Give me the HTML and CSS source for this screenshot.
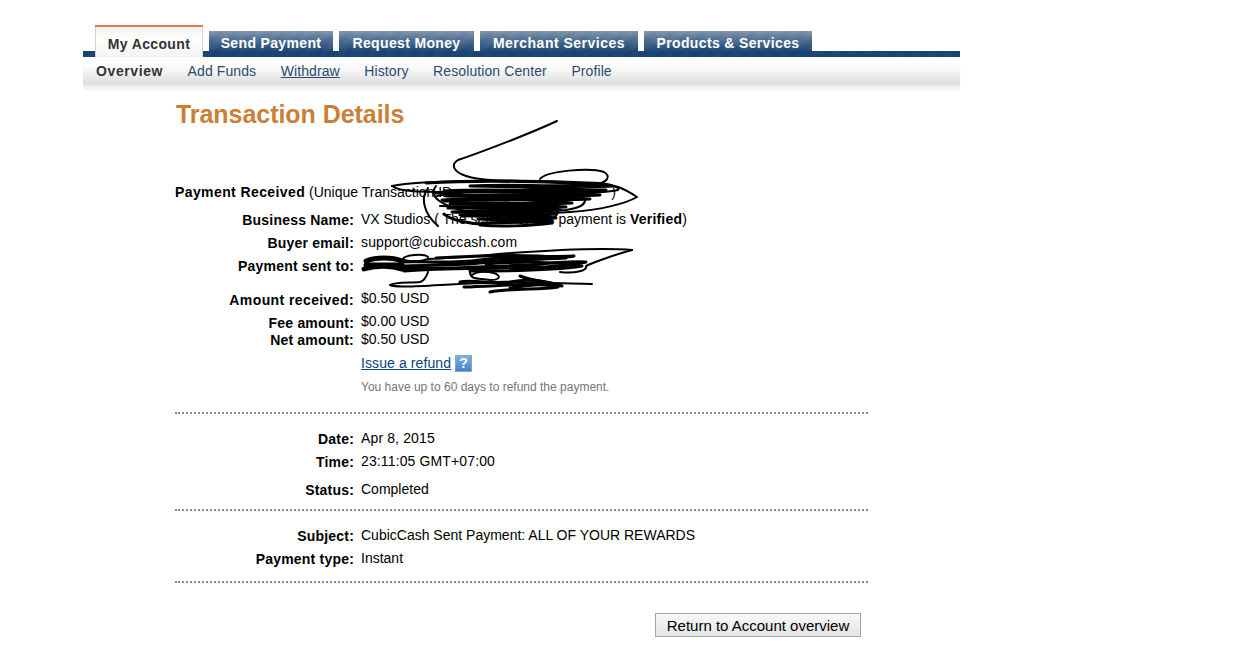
FILE: index.html
```html
<!DOCTYPE html>
<html lang="en">
<head>
  <meta charset="UTF-8">
  <meta name="viewport" content="width=device-width, initial-scale=1">
  <title>Transaction Details</title>
  <link rel="stylesheet" href="styles.css">
</head>

<body>

<div class="page">
  <div class="tabs">
    <a class="tab active" href="#">My Account</a>
    <a class="tab tab-send" href="#">Send Payment</a>
    <a class="tab tab-request" href="#">Request Money</a>
    <a class="tab tab-merchant" href="#">Merchant Services</a>
    <a class="tab tab-products" href="#">Products &amp; Services</a>
  </div>
  <div class="bar"></div>
  <div class="subnav">
    <a class="current" href="#">Overview</a>
    <a href="#">Add Funds</a>
    <a class="hover" href="#">Withdraw</a>
    <a href="#">History</a>
    <a href="#">Resolution Center</a>
    <a href="#">Profile</a>
  </div>

  <div class="content">
    <h1>Transaction Details</h1>

    <p class="received"><b>Payment Received</b> (Unique Transaction ID<span class="blanked"></span>)</p>

    <div class="row"><b>Business Name:</b><div>VX Studios ( The sender of this payment is <b>Verified</b>)</div></div>
    <div class="row"><b>Buyer email:</b><div class="wide">support@cubiccash.com</div></div>
    <div class="row row-sent"><b>Payment sent to:</b><div></div></div>
    <div class="row row-amount"><b>Amount received:</b><div>$0.50 USD</div></div>
    <div class="row row-net"><b>Fee amount:</b><div>$0.00 USD</div></div>
    <div class="row row-refund"><b>Net amount:</b><div>$0.50 USD</div></div>
    <div class="row row-note">
      <b></b>
      <div><a class="refund" href="#">Issue a refund</a><span class="help">?</span></div>
    </div>
    <div class="row"><b></b><div class="note">You have up to 60 days to refund the payment.</div></div>

    <hr class="dots dots-first">

    <div class="row"><b>Date:</b><div class="wide">Apr 8, 2015</div></div>
    <div class="row row-time"><b>Time:</b><div class="wide">23:11:05 GMT+07:00</div></div>
    <div class="row"><b>Status:</b><div>Completed</div></div>

    <hr class="dots dots-second">

    <div class="row"><b>Subject:</b><div>CubicCash Sent Payment: ALL OF YOUR REWARDS</div></div>
    <div class="row"><b>Payment type:</b><div>Instant</div></div>

    <hr class="dots dots-third">

    <div class="actions">
      <button class="btn">Return to Account overview</button>
    </div>
  </div>
</div>

<!-- pen scribbles drawn over the screenshot -->
<svg class="scribble" viewBox="0 0 1250 653" fill="none" stroke="#000" stroke-linecap="round" stroke-linejoin="round" stroke-width="2">
  <!-- top blob -->
  <path d="M557 121C520 138 470 156 458 160C450 165 454 172 466 176C480 181 510 181 540 181"/>
  <path d="M540 179C546 171 590 167 604 172C612 177 606 182 598 184"/>
  <path d="M392 186C420 180 520 179 600 183C614 185 622 187 637 197C625 204 600 210 570 212C540 214 500 216 470 214"/>
  <path d="M392 186C400 192 420 192 460 192C520 192 590 196 618 190C622 186 600 183 580 184"/>
  <path d="M428 188C420 198 424 214 438 226M436 186C428 196 440 206 470 212C500 220 540 226 556 216C562 208 550 198 530 197"/>
  <path d="M437 196C470 190 540 190 584 197C588 204 580 208 566 210C530 212 480 206 440 206"/>
  <path stroke-width="3" d="M426 183C480 180 560 181 612 186C580 188 520 183 470 186C520 186 580 190 606 190C570 193 500 188 444 191"/>
  <path stroke-width="3" d="M436 193C490 190 540 192 600 195C560 197 500 193 446 196C490 197 540 196 590 199C550 201 490 197 442 200"/>
  <path stroke-width="3" d="M444 201C490 199 540 200 572 203C530 205 480 201 450 204C490 205 540 205 566 207C530 209 480 206 456 208"/>
  <path stroke-width="3" d="M448 208C480 208 530 208 560 210C530 212 480 210 452 212C480 213 520 213 556 214C530 216 490 214 460 215"/>
  <path stroke-width="3" d="M462 216C490 215 530 216 556 218C530 219 500 218 478 219C500 220 530 220 552 221C530 223 500 222 482 223"/>
  <path stroke-width="3" d="M480 225C500 227 530 226 552 223M444 214C450 220 470 224 484 224"/>

  <!-- lower blob -->
  <path d="M632 250C600 247 550 250 498 254C480 256 460 258 428 259C420 262 408 262 403 259C404 255 424 253 428 257"/>
  <path d="M632 250C610 256 590 264 586 266C588 270 576 274 560 272"/>
  <path stroke-width="5" d="M366 261C376 257 392 257 402 261M364 269C376 265 392 266 402 269M366 265L402 265"/>
  <path stroke-width="3" d="M400 262C430 261 450 264 480 260C510 256 540 257 574 256C560 259 520 259 480 263C450 266 420 265 402 266"/>
  <path stroke-width="3" d="M402 268C440 270 490 266 530 265C550 263 570 261 586 262C570 266 540 268 500 268C480 269 450 268 404 271"/>
  <path stroke-width="3" d="M436 258C470 256 530 254 566 258C530 260 490 260 460 263M486 264C520 261 560 262 582 266C550 271 500 271 470 271"/>
  <path d="M470 272C470 280 478 278 490 280C500 280 502 276 494 273C484 271 476 272 472 275"/>
  <path d="M428 272C426 278 424 281 420 282C410 283 394 282 390 285C396 288 420 286 458 284M458 284C490 282 540 282 592 284"/>
  <path stroke-width="3" d="M460 282C470 279 480 284 510 282C530 278 550 282 562 286C540 282 500 286 464 287"/>
  <path stroke-width="3" d="M490 292C510 288 540 290 558 287C550 284 530 284 510 288M520 276C530 280 545 282 558 285"/>
</svg>

</body>
</html>
```

FILE: styles.css
```css
body {
  margin: 0;
  background: white;
  font-family: "Liberation Sans", Arial, sans-serif;
  font-size: 14px;
  color: #000;
}
.page {
  width: 877px;
  margin-left: 83px;
}
.tabs {
  display: flex;
  align-items: flex-end;
  gap: 6px;
  height: 26px;
  padding: 25px 0 0 12px;
}
.tab {
  display: block;
  height: 20px;
  line-height: 24px;
  text-align: center;
  font-weight: bold;
  letter-spacing: 0.35px;
  color: white;
  text-decoration: none;
  background:
    repeating-linear-gradient(135deg, rgba(255,255,255,0.07) 0 1px, rgba(0,0,0,0.04) 1px 2px),
    linear-gradient(#7f96af, #4a6c92 45%, #1c4372);
}
.tab.active {
  width: 108px;
  height: 32px;
  margin-bottom: -6px;
  line-height: 34px;
  box-sizing: border-box;
  border-top: 2px solid #e8764a;
  color: #333;
  background: linear-gradient(#f2f2f0, #fff 40%, #f4f4f4);
  box-shadow: inset -1px 0 #d4d4d4, inset 1px 0 #d4d4d4;
  position: relative;
}
.tab-send { width: 124px; }
.tab-request { width: 135px; }
.tab-merchant { width: 158px; letter-spacing: 0.5px; }
.tab-products { width: 168px; }
.bar {
  height: 6px;
  background: repeating-linear-gradient(135deg, #17406f 0 1px, #1f4a7a 1px 2px);
}
.subnav {
  display: flex;
  gap: 24.5px;
  height: 27px;
  padding-left: 13px;
  line-height: 28px;
  letter-spacing: 0.1px;
  background: linear-gradient(#fff, #fbfbfb 40%, #dcdcdc);
  box-shadow: 0 2px 0 #dfe3e8, 0 6px 2px #f1f4f7;
}
.subnav a {
  color: #2c4a70;
  text-decoration: none;
}
.subnav .current {
  font-weight: bold;
  letter-spacing: 0.6px;
  color: #333;
}
.subnav .hover {
  text-decoration: underline;
}
.content {
  width: 693px;
  padding-left: 92px;
}
h1 {
  margin: 0;
  padding: 15px 0 0 1px;
  height: 36px;
  font-size: 25px;
  line-height: 30px;
  letter-spacing: -0.05px;
  color: #ca7f37;
}
.received {
  margin: 49px 0 0;
  height: 27px;
  line-height: 17px;
}
.received b {
  letter-spacing: 0.4px;
}
.row b {
  letter-spacing: 0.2px;
}
.blanked {
  display: inline-block;
  width: 159px;
}
.row {
  display: grid;
  grid-template-columns: 179px 1fr;
  column-gap: 7px;
  height: 23px;
  line-height: 17px;
}
.row > b {
  text-align: right;
  padding-top: 1px;
}
.row-sent { height: 34px; }
.row-net { height: 17px; }
.row-refund, .row-note { height: 24px; }
.row-time { height: 28px; }
.row-amount b { letter-spacing: 0.4px; }
.row-amount > div, .row-net > div { margin-top: -1px; }
.wide { letter-spacing: 0.13px; }
.refund {
  color: #084482;
  letter-spacing: 0.1px;
}
.help {
  display: inline-block;
  width: 15px;
  height: 15px;
  margin-left: 4px;
  vertical-align: 0;
  border: 1px solid #8ca6c0;
  text-align: center;
  font-weight: bold;
  font-size: 14px;
  line-height: 15px;
  color: white;
  background: linear-gradient(#7fb2e6, #3f82c8);
}
.note {
  font-size: 12px;
  color: #757575;
}
.dots {
  margin: 0;
  border: 0;
  border-top: 2px dotted #8a8a8a;
}
.dots-first { margin-top: 10px; }
.dots-second { margin-top: 5px; }
.dots-third { margin-top: 8px; }
.dots + .row { margin-top: 16px; }
.actions {
  display: flex;
  justify-content: flex-end;
  padding: 29px 7px 0 0;
}
.btn {
  width: 206px;
  height: 24px;
  margin-top: 1px;
  padding: 0;
  font-family: inherit;
  font-size: 15px;
  color: #000;
  border: 1px solid #a5a5a5;
  background: linear-gradient(#f8f8f8, #e4e4e4);
  cursor: pointer;
}
.scribble {
  position: absolute;
  top: 0;
  left: 0;
  width: 1250px;
  height: 653px;
  pointer-events: none;
}
```
